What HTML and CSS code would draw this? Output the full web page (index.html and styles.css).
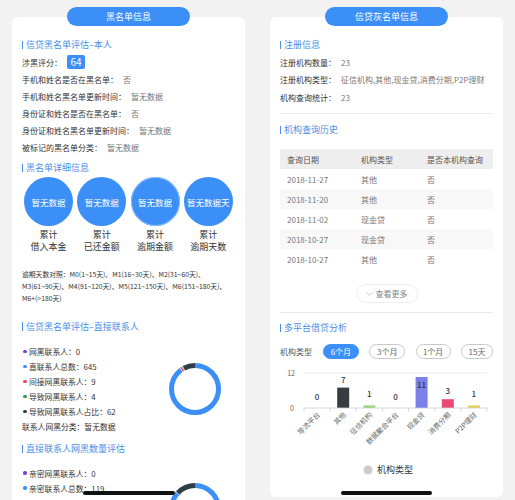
FILE: index.html
```html
<!DOCTYPE html>
<html lang="zh">
<head>
<meta charset="utf-8">
<title>黑名单信息</title>
<link rel="stylesheet" href="styles.css">
</head>
<body>
<div class="page">
  <section class="col">
    <div class="pill">黑名单信息</div>
    <div class="card card-left">
      <h3 class="title">信贷黑名单评估–本人</h3>
      <div class="rows">
        <div class="row row-score"><span class="label">涉黑评分：</span><span class="badge">64</span></div>
        <div class="row"><span class="label">手机和姓名是否在黑名单：</span><span class="val">否</span></div>
        <div class="row"><span class="label">手机和姓名黑名单更新时间：</span><span class="val">暂无数据</span></div>
        <div class="row"><span class="label">身份证和姓名是否在黑名单：</span><span class="val">否</span></div>
        <div class="row"><span class="label">身份证和姓名黑名单更新时间：</span><span class="val">暂无数据</span></div>
        <div class="row"><span class="label">被标记的黑名单分类：</span><span class="val">暂无数据</span></div>
      </div>

      <h3 class="title t-gap5">黑名单详细信息</h3>
      <div class="circles">
        <div class="stat"><div class="circle">暂无数据</div><div class="cap"><span class="cl">累计</span><span class="cl">借入本金</span></div></div>
        <div class="stat"><div class="circle">暂无数据</div><div class="cap"><span class="cl">累计</span><span class="cl">已还金额</span></div></div>
        <div class="stat"><div class="circle circle-sel">暂无数据</div><div class="cap"><span class="cl">累计</span><span class="cl">逾期金额</span></div></div>
        <div class="stat"><div class="circle">暂无数据天</div><div class="cap"><span class="cl">累计</span><span class="cl">逾期天数</span></div></div>
      </div>
      <div class="overdue">
        <span class="ln">逾期天数对照：M0(1~15天)、M1(16~30天)、M2(31~60天)、</span>
        <span class="ln">M3(61~90天)、M4(91~120天)、M5(121~150天)、M6(151~180天)、</span>
        <span class="ln">M6+(&gt;180天)</span>
      </div>

      <h3 class="title t-gap16">信贷黑名单评估–直接联系人</h3>
      <div class="contacts c1">
        <ul class="blist">
          <li><i class="dot d-purple"></i>网黑联系人：0</li>
          <li><i class="dot d-blue"></i>直联系人总数：645</li>
          <li><i class="dot d-red"></i>间接网黑联系人：9</li>
          <li><i class="dot d-green"></i>导致网黑联系人：4</li>
          <li><i class="dot d-dark"></i>导致网黑联系人占比：62</li>
          <li>联系人网黑分类：暂无数据</li>
        </ul>
        <svg class="donut" width="54" height="54" viewBox="0 0 54 54">
          <g transform="rotate(-90 27 27)" fill="none" stroke-width="5">
            <circle cx="27" cy="27" r="23.5" stroke="#3b8ff6" stroke-dasharray="131.8 200" stroke-dashoffset="0"/>
            <circle cx="27" cy="27" r="23.5" stroke="#e8436b" stroke-dasharray="1.3 200" stroke-dashoffset="-132.5"/>
            <circle cx="27" cy="27" r="23.5" stroke="#3fa55a" stroke-dasharray="0.5 200" stroke-dashoffset="-134.3"/>
            <circle cx="27" cy="27" r="23.5" stroke="#2f3e46" stroke-dasharray="12.1 200" stroke-dashoffset="-135.2"/>
          </g>
        </svg>
      </div>

      <h3 class="title t-gap8">直接联系人网黑数量评估</h3>
      <div class="contacts c2">
        <ul class="blist">
          <li><i class="dot d-purple"></i>亲密网黑联系人：0</li>
          <li><i class="dot d-blue"></i>亲密联系人总数：119</li>
        </ul>
        <svg class="donut donut2" width="54" height="54" viewBox="0 0 54 54">
          <g transform="rotate(-90 27 27)" fill="none" stroke-width="5">
            <circle cx="27" cy="27" r="23.5" stroke="#3b8ff6" stroke-dasharray="127 200" stroke-dashoffset="0"/>
            <circle cx="27" cy="27" r="23.5" stroke="#2f3e46" stroke-dasharray="19.8 200" stroke-dashoffset="-127.6"/>
          </g>
        </svg>
      </div>
    </div>
  </section>

  <section class="col">
    <div class="pill">信贷灰名单信息</div>
    <div class="card card-right">
      <h3 class="title">注册信息</h3>
      <div class="rrows">
        <div class="rrow"><span class="label">注册机构数量：</span><span class="val">23</span></div>
        <div class="rrow"><span class="label">注册机构类型：</span><span class="val">征信机构,其他,现金贷,消费分期,P2P理财</span></div>
        <div class="rrow"><span class="label">机构查询统计：</span><span class="val">23</span></div>
      </div>
      <div class="divider"></div>

      <h3 class="title t-gap9">机构查询历史</h3>
      <table class="hist">
        <colgroup><col class="w1"><col class="w2"><col class="w3"></colgroup>
        <thead><tr><th>查询日期</th><th>机构类型</th><th>是否本机构查询</th></tr></thead>
        <tbody>
          <tr><td>2018-11-27</td><td>其他</td><td>否</td></tr>
          <tr><td>2018-11-20</td><td>其他</td><td>否</td></tr>
          <tr><td>2018-11-02</td><td>现金贷</td><td>否</td></tr>
          <tr><td>2018-10-27</td><td>现金贷</td><td>否</td></tr>
          <tr><td>2018-10-27</td><td>其他</td><td>否</td></tr>
        </tbody>
      </table>
      <div class="more"><span class="more-btn"><svg width="7" height="4" viewBox="0 0 7 4"><polyline points="0.5,0.5 3.5,3.3 6.5,0.5" fill="none" stroke="#bbb" stroke-width="0.8"/></svg>查看更多</span></div>
      <div class="divider d2"></div>

      <h3 class="title t-gap8">多平台借贷分析</h3>
      <div class="tabs">
        <span class="tabs-lbl">机构类型</span>
        <span class="tab tab-on w36">6个月</span>
        <span class="tab w36">3个月</span>
        <span class="tab w35">1个月</span>
        <span class="tab w32">15天</span>
      </div>
      <svg class="chart" width="213" height="116" viewBox="0 0 213 116">
        <line x1="24" y1="9" x2="207" y2="9" stroke="#e6e6e6" stroke-width="0.8"/>
        <text class="ax" x="15" y="11.5" text-anchor="end">12</text>
        <text class="ax" x="14" y="46.5" text-anchor="end">0</text>
        <rect x="57.2" y="23.6" width="12" height="20.4" fill="#3a3b40"/>
        <rect x="83.4" y="41.4" width="12" height="2.6" fill="#9bd67a"/>
        <rect x="135.6" y="13" width="12" height="31" fill="#7b7fe8"/>
        <rect x="161.8" y="35.2" width="12" height="8.8" fill="#ea4a72"/>
        <rect x="187.9" y="41.4" width="12" height="2.6" fill="#e6d25a"/>
        <line x1="24" y1="44" x2="207" y2="44" stroke="#c9ced8" stroke-width="0.8"/>
        <g stroke="#c9ced8" stroke-width="0.8">
          <line x1="24" y1="44" x2="24" y2="47.5"/>
          <line x1="50.14" y1="44" x2="50.14" y2="47.5"/>
          <line x1="76.29" y1="44" x2="76.29" y2="47.5"/>
          <line x1="102.43" y1="44" x2="102.43" y2="47.5"/>
          <line x1="128.57" y1="44" x2="128.57" y2="47.5"/>
          <line x1="154.71" y1="44" x2="154.71" y2="47.5"/>
          <line x1="180.86" y1="44" x2="180.86" y2="47.5"/>
          <line x1="207" y1="44" x2="207" y2="47.5"/>
        </g>
        <text class="vl" x="37.1" y="36" text-anchor="middle">0</text>
        <text class="vl" x="63.2" y="18.5" text-anchor="middle">7</text>
        <text class="vl" x="89.4" y="33" text-anchor="middle">1</text>
        <text class="vl" x="115.5" y="36" text-anchor="middle">0</text>
        <text class="vl" x="141.6" y="24" text-anchor="middle">11</text>
        <text class="vl" x="167.8" y="29.5" text-anchor="middle">3</text>
        <text class="vl" x="193.9" y="33" text-anchor="middle">1</text>
        <text class="xl" x="39" y="50" text-anchor="end" transform="rotate(-45 39 50)">导流平台</text>
        <text class="xl" x="65.2" y="50" text-anchor="end" transform="rotate(-45 65.2 50)">其他</text>
        <text class="xl" x="91.4" y="50" text-anchor="end" transform="rotate(-45 91.4 50)">征信机构</text>
        <text class="xl" x="117.5" y="50" text-anchor="end" transform="rotate(-45 117.5 50)">数据聚合平台</text>
        <text class="xl" x="143.6" y="50" text-anchor="end" transform="rotate(-45 143.6 50)">现金贷</text>
        <text class="xl" x="169.8" y="50" text-anchor="end" transform="rotate(-45 169.8 50)">消费分期</text>
        <text class="xl" x="195.9" y="50" text-anchor="end" transform="rotate(-45 195.9 50)">P2P理财</text>
        <circle cx="88" cy="106" r="4.5" fill="#cccccc"/>
        <text class="lg" x="97" y="109.2">机构类型</text>
      </svg>
    </div>
  </section>
</div>
<div class="home home-l"></div>
<div class="home home-r"></div>
</body>
</html>
```

FILE: styles.css
```css
* { box-sizing: border-box; margin: 0; padding: 0; }
html, body { height: 500px; overflow: hidden; }
body {
  background: #f2f2f2;
  font-family: "Noto Sans CJK SC", "Noto Sans", sans-serif;
  color: #333;
  font-size: 8px;
}
.page { display: flex; gap: 25px; padding: 7px 12px 0; }
.col { width: 233px; display: flex; flex-direction: column; align-items: center; }
.pill {
  width: 123px; height: 19px; border-radius: 10px;
  background: #3b8ff6; color: #fff;
  font-size: 9px; line-height: 19px; text-align: center;
  position: relative; z-index: 1; margin-bottom: -9px;
}
.card { align-self: stretch; background: #fff; border-radius: 6px; padding: 21px 10px 17px; }
.card-left { min-height: 640px; }

.title {
  font-size: 9px; font-weight: normal; color: #4a8fe9;
  height: 14px; line-height: 14px; display: flex; align-items: center; white-space: nowrap;
}
.title::before { content: ""; width: 1px; height: 8.5px; background: #4a8fe9; margin-right: 3px; }
.t-gap5 { margin-top: 5px; }
.t-gap8 { margin-top: 8px; }
.t-gap9 { margin-top: 9px; }
.t-gap16 { margin-top: 16px; }

.rows { margin-top: 1px; }
.row { height: 17px; line-height: 17px; white-space: nowrap; display: flex; align-items: center; }
.row-score { height: 18px; }
.val { color: #777; margin-left: 5px; }
.badge {
  background: #3b8ff6; color: #fff; font-size: 10px; line-height: 14px;
  padding: 0 3.5px; border-radius: 2px; margin-left: 5px;
}

.circles { display: grid; grid-template-columns: repeat(4, 1fr); margin-top: 2px; text-align: center; }
.circle {
  width: 49px; height: 49px; border-radius: 50%;
  background: #3b8ff6; color: #fff; font-size: 8.5px;
  display: flex; align-items: center; justify-content: center; margin: 0 auto;
}
.circle-sel { box-shadow: inset 0 0 0 1px #8cbcf9; }
.cap { margin-top: 3px; font-size: 9px; color: #333; display: flex; flex-direction: column; align-items: center; }
.cl { display: block; height: 11.5px; line-height: 11.5px; }

.overdue { margin-top: 15.5px; font-size: 6.8px; line-height: 12px; white-space: nowrap; color: #333; }
.ln { display: block; }

.contacts { display: flex; align-items: center; justify-content: space-between; }
.c1 { margin-top: 10.5px; }
.c2 { margin-top: 9.5px; align-items: flex-start; }
.blist { list-style: none; }
.blist li {
  height: 15px; line-height: 15px; font-size: 7.8px; color: #333;
  display: flex; align-items: center; white-space: nowrap;
}
.dot { width: 3.5px; height: 3.5px; border-radius: 50%; margin: 0 2.5px 0 1px; display: inline-block; }
.d-purple { background: #7a3fe0; }
.d-blue { background: #3b8ff6; }
.d-red { background: #e8436b; }
.d-green { background: #2f9d4c; }
.d-dark { background: #2f3e46; }
.donut { margin-right: 13px; display: block; flex-shrink: 0; }
.donut2 { margin-top: 16px; }

.rrows { margin-top: 1.5px; }
.rrow { height: 17.5px; line-height: 17.5px; white-space: nowrap; display: flex; align-items: center; }
.divider { height: 1px; background: #e9e9e9; margin-top: 7px; }
.d2 { margin-top: 9px; }

.hist { width: 100%; border-collapse: collapse; table-layout: fixed; margin-top: 12px; }
.w1 { width: 74px; }
.w2 { width: 66px; }
.w3 { width: 73px; }
.hist th, .hist td {
  height: 20px; padding: 0 0 0 7px; text-align: left;
  font-weight: normal; font-size: 8px; white-space: nowrap;
}
.hist th { background: #eeeeee; color: #555; }
.hist td { color: #777; }
.hist tbody tr:nth-child(even) td { background: #f8f8f8; }

.more { display: flex; justify-content: center; margin-top: 15px; }
.more-btn {
  width: 62px; height: 19px; border: 1px solid #efefef; border-radius: 10px;
  display: flex; align-items: center; justify-content: center; gap: 3px;
  color: #888; font-size: 8px;
}

.tabs { display: flex; align-items: center; gap: 10.5px; margin-top: 9px; height: 15px; }
.tabs-lbl { color: #555; font-size: 8px; width: 32.5px; white-space: nowrap; }
.tab {
  height: 15px; border-radius: 8px; border: 1px solid #c8c8c8; color: #666;
  font-size: 8px; display: flex; align-items: center; justify-content: center;
}
.tab-on { background: #3b8ff6; border-color: #3b8ff6; color: #fff; }
.w36 { width: 36px; }
.w35 { width: 35px; }
.w32 { width: 32px; }

.chart { display: block; margin-top: 5px; font-family: "Noto Sans CJK SC", sans-serif; }
.chart .ax { font-size: 7px; fill: #666; }
.chart .vl { font-size: 8px; fill: #333; font-weight: 500; }
.chart .xl { font-size: 7px; fill: #666; dominant-baseline: middle; }
.chart .lg { font-size: 9px; fill: #333; }

.home { position: fixed; top: 491px; height: 4px; border-radius: 2px; background: #111; }
.home-l { left: 83px; width: 92px; }
.home-r { left: 341px; width: 91px; }
```
